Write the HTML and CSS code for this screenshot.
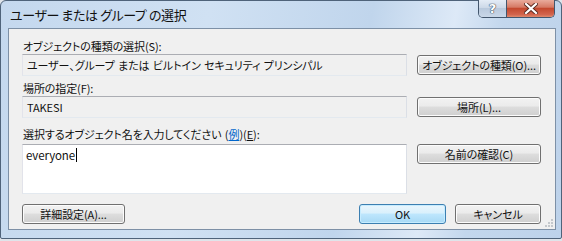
FILE: index.html
```html
<!DOCTYPE html>
<html lang="ja">
<head>
    <meta charset="UTF-8">
    <title>ユーザー または グループ の選択</title>
    <link rel="stylesheet" href="styles.css">
</head>
<body>

<div class="window">
    <div class="titlebar">
        <div class="title">ユーザー または グループ の選択</div>
        <div class="caption-buttons">
            <div class="cap-btn help"><span>?</span></div>
            <div class="cap-btn close">
                <svg width="14" height="11" viewBox="0 0 14 11">
                    <path d="M2 1 L12 10 M12 1 L2 10" stroke="#5b2a20" stroke-width="4" stroke-linecap="square"/>
                    <path d="M2 1 L12 10 M12 1 L2 10" stroke="#fff" stroke-width="2.2" stroke-linecap="square"/>
                </svg>
            </div>
        </div>
    </div>

    <div class="client">
        <div class="label">オブジェクトの種類の選択(S):</div>
        <div class="row">
            <div class="field readonly">ユーザー、グループ または ビルトイン セキュリティ プリンシパル</div>
            <button class="btn side">オブジェクトの種類(O)...</button>
        </div>

        <div class="label second">場所の指定(F):</div>
        <div class="row">
            <div class="field readonly">TAKESI</div>
            <button class="btn side">場所(L)...</button>
        </div>

        <div class="label third">選択するオブジェクト名を入力してください (<a class="link">例</a>)(<u>E</u>):</div>
        <div class="row names">
            <div class="field input">everyone<span class="caret"></span></div>
            <button class="btn side check">名前の確認(C)</button>
        </div>

        <div class="footer">
            <button class="btn advanced">詳細設定(A)...</button>
            <div class="spacer"></div>
            <button class="btn ok">OK</button>
            <button class="btn cancel">キャンセル</button>
        </div>

        <svg class="grip" width="10" height="10" viewBox="0 0 10 10">
            <rect x="7" y="1" width="2" height="2" fill="#c4c8cc"/>
            <rect x="4" y="4" width="2" height="2" fill="#c4c8cc"/>
            <rect x="7" y="4" width="2" height="2" fill="#c4c8cc"/>
            <rect x="1" y="7" width="2" height="2" fill="#c4c8cc"/>
            <rect x="4" y="7" width="2" height="2" fill="#c4c8cc"/>
            <rect x="7" y="7" width="2" height="2" fill="#c4c8cc"/>
        </svg>
    </div>
</div>

</body>
</html>
```

FILE: styles.css
```css
* {
    box-sizing: border-box;
}
body {
    margin: 0;
    background: #dfe4ea;
    font-family: "Noto Sans CJK JP", "Noto Sans", sans-serif;
    font-feature-settings: "palt";
    font-size: 11px;
    letter-spacing: -0.1px;
    word-spacing: 1px;
    color: #111;
}
.window {
    width: 562px;
    height: 239px;
    border: 1px solid #4f637a;
    border-radius: 6px 6px 2px 2px;
    background: linear-gradient(100deg, #c4d8ee 0%, #d0e1f3 35%, #c0d5ec 62%, #dde9f7 76%, #c3d7ed 84%, #bdd2ea 100%);
    padding: 0 5px 8px 7px;
    display: flex;
    flex-direction: column;
}
.titlebar {
    height: 27px;
    display: flex;
    align-items: flex-start;
    padding-left: 2px;
    padding-right: 1px;
}
.title {
    font-size: 13px;
    line-height: 27px;
    letter-spacing: -0.4px;
    word-spacing: 0;
    flex: 1;
}
.caption-buttons {
    display: flex;
    height: 18px;
    margin-top: -1px;
    border: 1px solid #43566d;
    border-top: none;
    border-radius: 0 0 5px 5px;
    overflow: hidden;
}
.cap-btn {
    height: 17px;
    display: flex;
    align-items: center;
    justify-content: center;
}
.help {
    width: 28px;
    border-right: 1px solid #43566d;
    background: linear-gradient(#e4ecf6, #cdd9e8 45%, #b9c9dd 50%, #c9d7e8);
}
.help span {
    font-family: "DejaVu Sans", sans-serif;
    font-weight: bold;
    font-size: 13px;
    letter-spacing: 0;
    color: #fff;
    text-shadow: 0 0 1px #3c4a5c, 0 0 1px #3c4a5c, 0 0 1px #3c4a5c;
}
.close {
    width: 47px;
    background: linear-gradient(#e9ab9c, #d67a65 42%, #c4492f 50%, #d2644d 85%, #e08a6d);
}
.client {
    position: relative;
    flex: 1;
    background: #f0f0f0;
    border: 1px solid #7d90a6;
    padding: 10px 14px 0 13px;
}
.label {
    height: 15px;
    line-height: 15px;
    padding-left: 1px;
    white-space: nowrap;
}
.label.second {
    margin-top: 5px;
}
.label.third {
    margin-top: 9px;
}
.link {
    color: #0066cc;
    text-decoration: underline;
}
.row {
    display: grid;
    grid-template-columns: 1fr 124px;
    column-gap: 10px;
    align-items: start;
}
.row.names {
    margin-top: 2px;
}
.field {
    height: 22px;
    line-height: 20px;
    padding-left: 4px;
    border: 1px solid;
    border-color: #abadb3 #dbdfe6 #e3e9ef #e2e3ea;
    white-space: nowrap;
    overflow: hidden;
}
.field.readonly {
    background: #f0f0f0;
}
.field.input {
    height: 50px;
    background: #fff;
    font-size: 11.5px;
    letter-spacing: -0.1px;
    line-height: 18px;
    padding-top: 1px;
    padding-left: 3px;
}
.caret {
    display: inline-block;
    width: 1px;
    height: 14px;
    margin-left: 1px;
    background: #000;
    vertical-align: -2px;
}
.btn {
    font-family: inherit;
    font-feature-settings: "palt";
    font-size: 11px;
    letter-spacing: -0.1px;
    white-space: nowrap;
    height: 20px;
    padding: 0;
    line-height: 17px;
    color: #111;
    border: 1px solid #707070;
    border-radius: 3px;
    background: linear-gradient(#f2f2f2 0%, #ebebeb 45%, #dddddd 50%, #cfcfcf 100%);
    box-shadow: inset 0 0 0 1px #fcfcfc;
}
.btn.side {
    margin-top: 1px;
}
.btn.check {
    margin-top: 0;
}
.footer {
    display: flex;
    gap: 9px;
    margin-top: 10px;
}
.spacer {
    flex: 1;
}
.advanced {
    width: 103px;
}
.ok {
    width: 87px;
    border-color: #3c7fb1;
    background: linear-gradient(#eaf6fd 0%, #d9f0fc 45%, #bee6fd 50%, #a7d9f5 100%);
    box-shadow: inset 0 0 0 1px #c6ecff;
}
.cancel {
    width: 86px;
}
.grip {
    position: absolute;
    right: 1px;
    bottom: 1px;
}
```
